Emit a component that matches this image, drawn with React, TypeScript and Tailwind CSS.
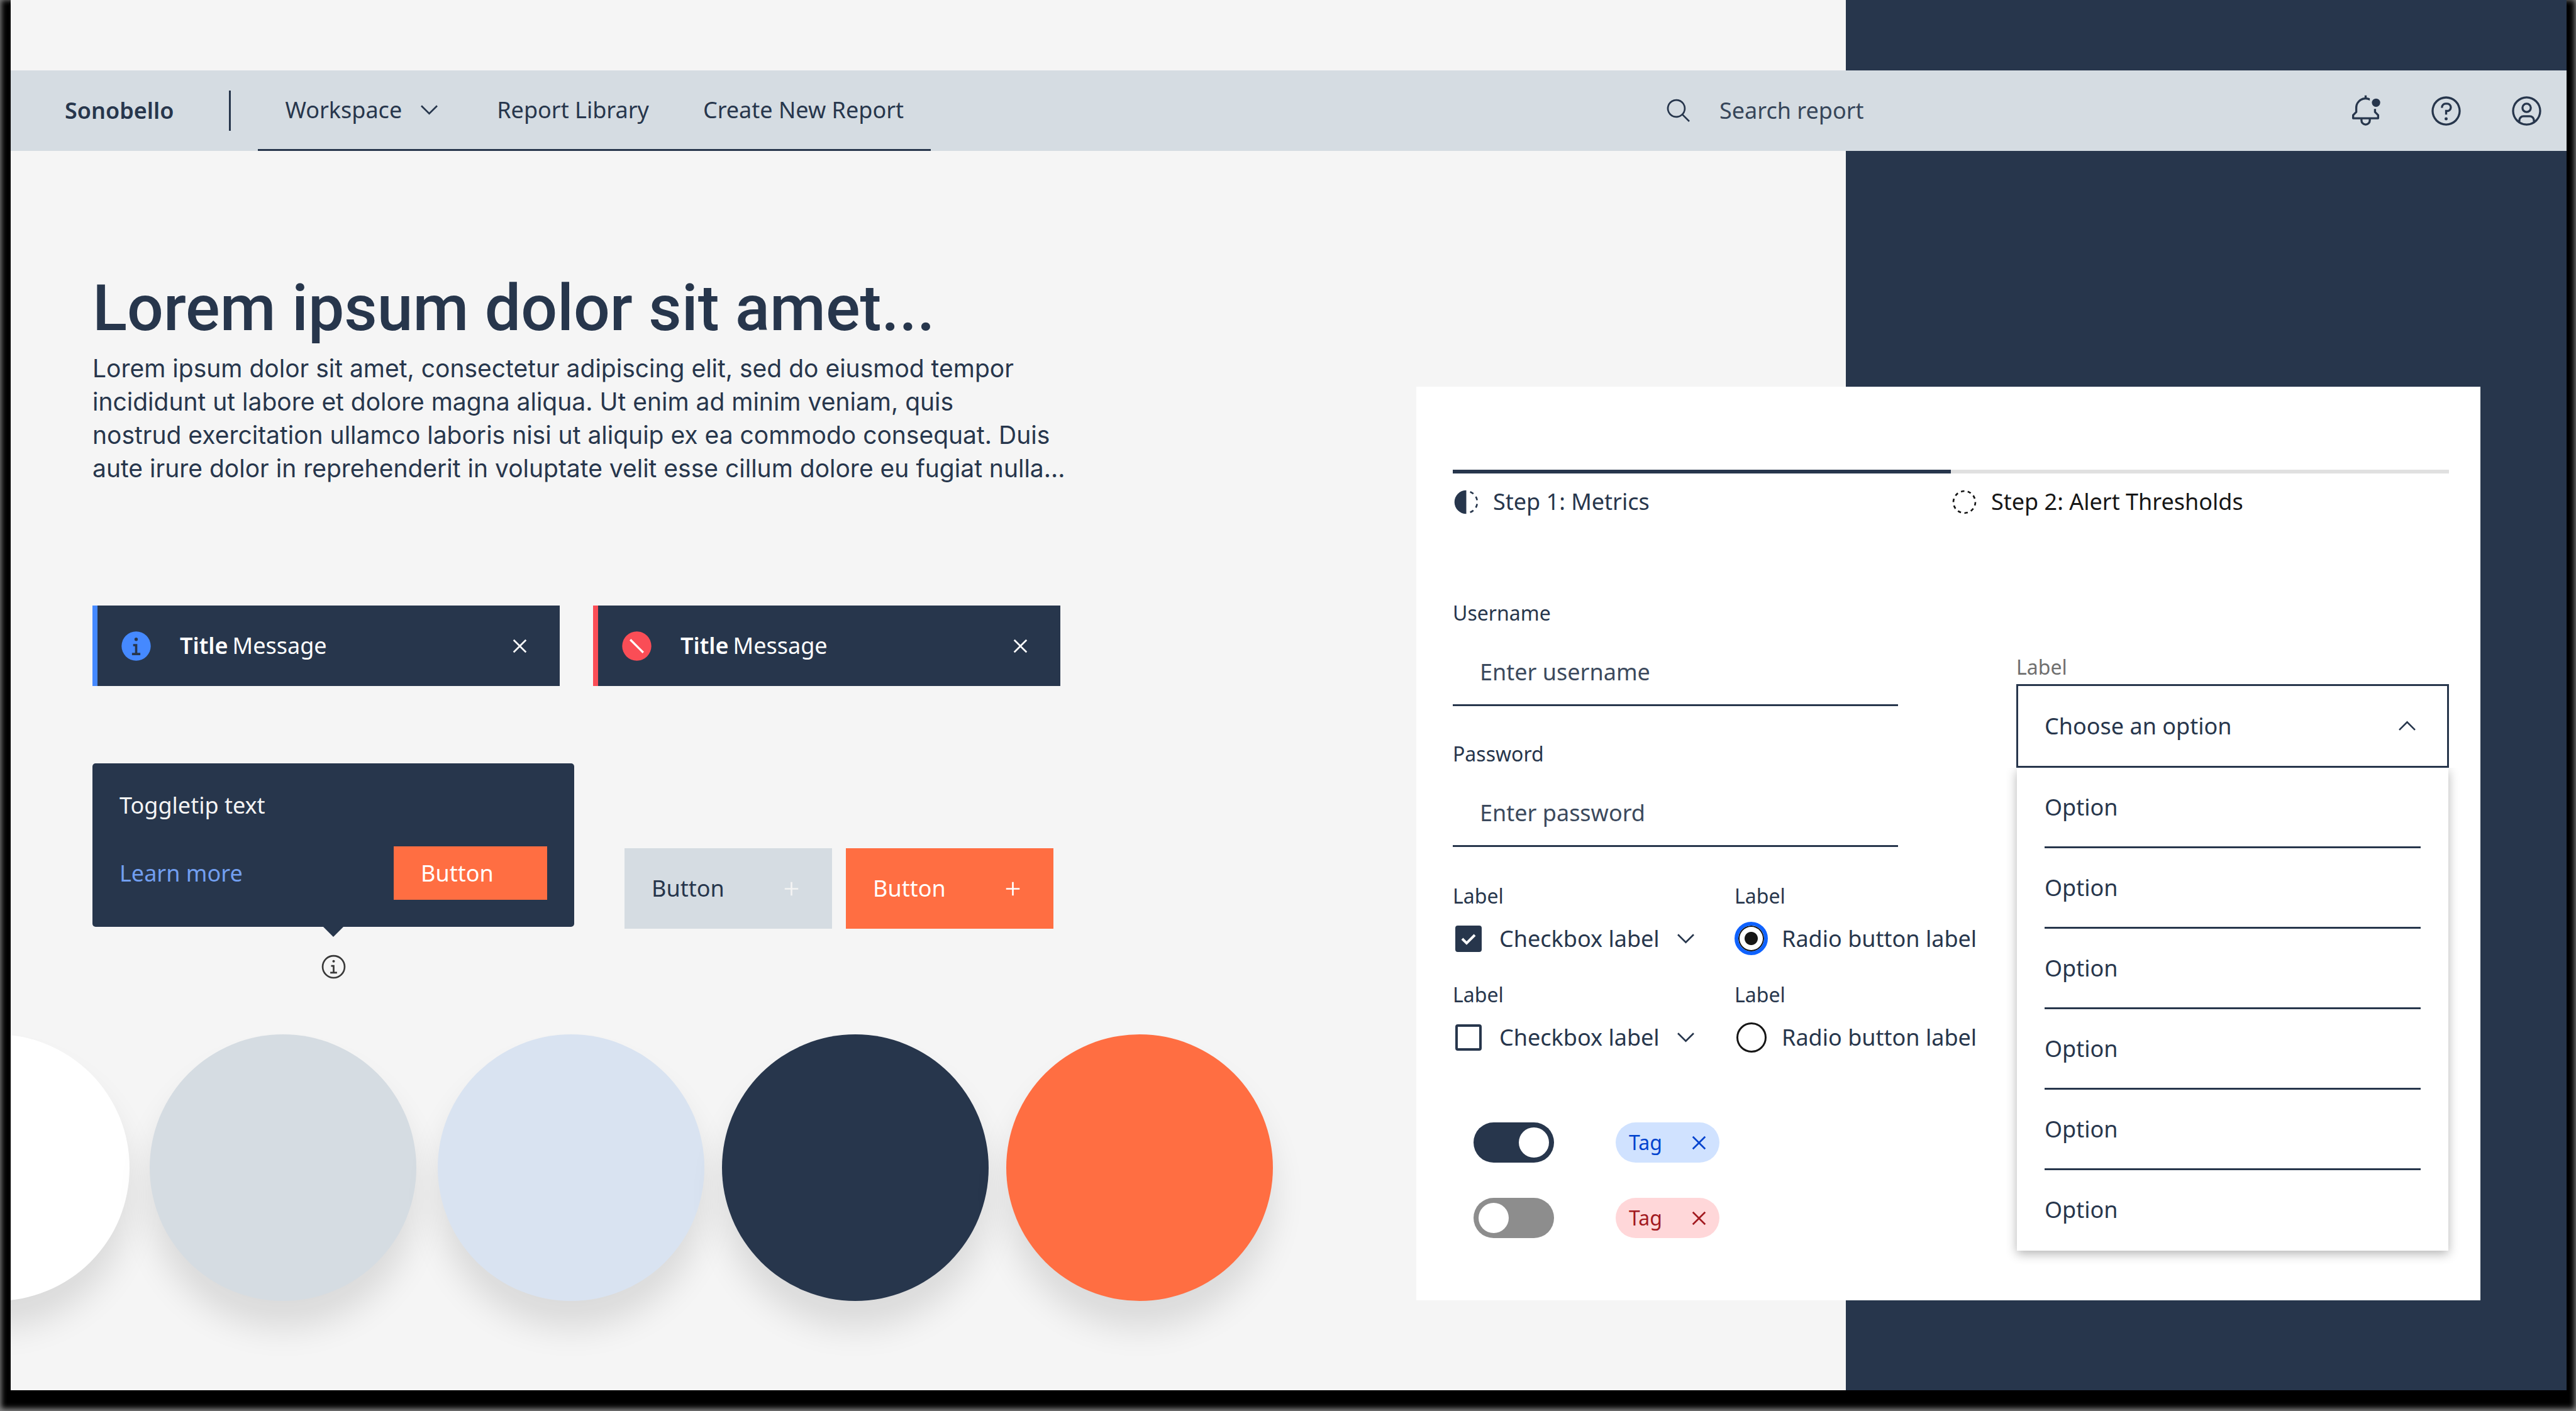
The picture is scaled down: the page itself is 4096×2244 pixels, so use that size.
import type { ReactNode } from "react";

type IconProps = { className?: string; children: ReactNode };

function Icon({ className = "size-[43px]", children }: IconProps) {
  return (
    <svg viewBox="0 0 32 32" fill="currentColor" aria-hidden="true" className={`shrink-0 ${className}`}>
      {children}
    </svg>
  );
}

const ChevronDown = ({ className }: { className?: string }) => (
  <Icon className={className}>
    <path d="M16 22 6 12l1.4-1.4 8.6 8.6 8.6-8.6L26 12z" />
  </Icon>
);

const Close = () => (
  <Icon>
    <path d="M17.4141 16 24 9.4141 22.5859 8 16 14.5859 9.4143 8 8 9.4141 14.5859 16 8 22.5859 9.4143 24 16 17.4141 22.5859 24 24 22.5859z" />
  </Icon>
);

const Add = ({ className }: { className?: string }) => (
  <Icon className={className}>
    <path d="M17 15V8h-2v7H8v2h7v7h2v-7h7v-2z" />
  </Icon>
);

const Search = () => (
  <Icon>
    <path d="M29 27.5859l-7.5521-7.5521a11.0177 11.0177 0 1 0-1.4141 1.4141L27.5859 29ZM4 13a9 9 0 1 1 9 9A9.01 9.01 0 0 1 4 13Z" />
  </Icon>
);

const Bell = () => (
  <Icon className="size-[53px]">
    <path d="M28.7071 19.293 26 16.5859V14h-2v3a1 1 0 0 0 .293.707L27 20.4141V22H5v-1.5859l2.707-2.707A1 1 0 0 0 8 17v-4a7.985 7.985 0 0 1 12-6.918V3.8477a9.8963 9.8963 0 0 0-3-.7969V1h-2v2.0508A10.0145 10.0145 0 0 0 6 13v3.5859L3.293 19.293A1 1 0 0 0 3 20v3a1 1 0 0 0 1 1h7v1a5 5 0 0 0 10 0v-1h7a1 1 0 0 0 1-1v-3a1 1 0 0 0-.2929-.707ZM19 25a3 3 0 0 1-6 0v-1h6Z" />
    <circle cx="26" cy="8" r="4" />
  </Icon>
);

const Help = () => (
  <Icon className="size-[53px]">
    <path d="M16 2a14 14 0 1 0 14 14A14 14 0 0 0 16 2Zm0 26a12 12 0 1 1 12-12 12 12 0 0 1-12 12Z" />
    <circle cx="16" cy="23.5" r="1.5" />
    <path d="M17 8h-1.5a4.49 4.49 0 0 0-4.5 4.5v.5h2v-.5a2.5 2.5 0 0 1 2.5-2.5H17a2.5 2.5 0 0 1 0 5h-2v4.5h2V17a4.5 4.5 0 0 0 0-9Z" />
  </Icon>
);

const Avatar = () => (
  <Icon className="size-[53px]">
    <path d="M16 8a5 5 0 1 0 5 5 5 5 0 0 0-5-5Zm0 8a3 3 0 1 1 3-3 3.0034 3.0034 0 0 1-3 3Z" />
    <path d="M16 2a14 14 0 1 0 14 14A14.0158 14.0158 0 0 0 16 2ZM10 26.3765V25a3.0033 3.0033 0 0 1 3-3h6a3.0033 3.0033 0 0 1 3 3v1.3765a11.8989 11.8989 0 0 1-12 0Zm13.9925-1.4507A5.0016 5.0016 0 0 0 19 20h-6a5.0016 5.0016 0 0 0-4.9925 4.9258 12 12 0 1 1 15.985 0Z" />
  </Icon>
);

const InfoFilled = () => (
  <Icon className="size-[53px] text-[#4589ff]">
    <circle cx="16" cy="16" r="14" />
    <path className="fill-[#27364c]" d="M17.1 22.5V14h-4v2.2h1.8v6.3h-2.9v2.2h8v-2.2z" />
    <circle className="fill-[#27364c]" cx="16" cy="9.5" r="1.6" />
  </Icon>
);

const ErrorFilled = () => (
  <Icon className="size-[53px] text-[#fa4d56]">
    <circle cx="16" cy="16" r="14" />
    <path className="stroke-white" strokeWidth="2" d="M9.8 9.8l12.4 12.4" />
  </Icon>
);

const InfoOutline = () => (
  <Icon>
    <path d="M17 22v-8h-4v2h2v6h-3v2h8v-2z" />
    <circle cx="16" cy="9.5" r="1.5" />
    <path d="M16 30a14 14 0 1 1 14-14 14 14 0 0 1-14 14Zm0-26a12 12 0 1 0 12 12A12 12 0 0 0 16 4Z" />
  </Icon>
);

const StepCurrent = () => (
  <Icon>
    <path d="M16 2a14 14 0 0 0 0 28z" />
    <path d="M23.76 6.86l1.29-1.53a13.98 13.98 0 0 0-4.18-2.44l-.67 1.88a12 12 0 0 1 3.56 2.09zM27.81 14l1.97-.41a13.9 13.9 0 0 0-1.64-4.54L26.4 10a12 12 0 0 1 1.41 4zM20.2 27.23l.67 1.88a13.98 13.98 0 0 0 4.18-2.44l-1.29-1.53a12 12 0 0 1-3.56 2.09zM26.4 22l1.74 1a14.14 14.14 0 0 0 1.64-4.57L27.81 18a12 12 0 0 1-1.41 4z" />
  </Icon>
);

const StepPending = () => (
  <Icon>
    <path d="M7.7 4.7a14.7 14.7 0 0 0-3 3.1L6.3 9a13.26 13.26 0 0 1 2.6-2.7ZM4.6 12.3l-1.9-.6A12.51 12.51 0 0 0 2 16h2a11.48 11.48 0 0 1 .6-3.7ZM2.7 20.4a14.4 14.4 0 0 0 2 3.9l1.6-1.2a12.89 12.89 0 0 1-1.7-3.3ZM7.8 27.3a14.4 14.4 0 0 0 3.9 2l.6-1.9A12.89 12.89 0 0 1 9 25.7ZM11.7 2.7l.6 1.9A11.48 11.48 0 0 1 16 4V2a12.51 12.51 0 0 0-4.3.7ZM24.2 27.3a15.18 15.18 0 0 0 3.1-3.1L25.7 23a11.53 11.53 0 0 1-2.7 2.7ZM27.4 19.7l1.9.6A15.47 15.47 0 0 0 30 16h-2a11.48 11.48 0 0 1-.6 3.7ZM29.2 11.6a14.4 14.4 0 0 0-2-3.9l-1.6 1.2a12.89 12.89 0 0 1 1.7 3.3ZM24.1 4.6a14.4 14.4 0 0 0-3.9-2l-.6 1.9a12.89 12.89 0 0 1 3.3 1.7ZM20.3 29.3l-.6-1.9a11.48 11.48 0 0 1-3.7.6v2a21.42 21.42 0 0 0 4.3-.7Z" />
  </Icon>
);

function Header() {
  return (
    <header className="mt-28 flex h-32 items-center bg-[#d5dce2]">
      <a href="#home" className="pl-[86px] font-semibold">
        Sonobello
      </a>
      <nav aria-label="Main" className="ml-[88px] flex h-full items-center">
        <span className="mr-[43px] h-16 w-[3px] bg-[#27364c]" />
        <div className="flex h-full items-center gap-[86px] border-b-[3px] border-[#27364c] px-[43px]">
          <button type="button" className="flex items-center gap-[22px]">
            Workspace
            <ChevronDown />
          </button>
          <a href="#library">Report Library</a>
          <a href="#new">Create New Report</a>
        </div>
      </nav>
      <label className="ml-auto flex w-[1049px] items-center gap-[43px]">
        <Search />
        <input
          type="search"
          aria-label="Search report"
          placeholder="Search report"
          className="min-w-0 flex-1 bg-transparent outline-none placeholder:text-[#27364c] placeholder:opacity-90"
        />
      </label>
      <button type="button" aria-label="Notifications" className="grid size-32 place-items-center">
        <Bell />
      </button>
      <button type="button" aria-label="Help" className="grid size-32 place-items-center">
        <Help />
      </button>
      <button type="button" aria-label="Account" className="grid size-32 place-items-center">
        <Avatar />
      </button>
    </header>
  );
}

function Notification({ accent, icon }: { accent: string; icon: ReactNode }) {
  return (
    <div className={`flex h-32 w-[743px] items-center border-l-8 bg-[#27364c] pl-[35px] text-white ${accent}`}>
      {icon}
      <p className="ml-[43px] flex-1">
        <strong className="mr-[7px] font-semibold">Title</strong>
        Message
      </p>
      <button type="button" aria-label="Dismiss" className="grid size-32 place-items-center">
        <Close />
      </button>
    </div>
  );
}

function Toggletip() {
  return (
    <div className="flex w-[766px] flex-col items-center">
      <div className="w-full rounded-[5px] bg-[#27364c] px-[43px] pt-[43px] pb-[43px] text-[#f4f4f4]">
        <p>Toggletip text</p>
        <div className="mt-[41px] flex items-center justify-between">
          <a href="#more" className="text-[#729ff0]">
            Learn more
          </a>
          <button type="button" className="h-[85px] w-[244px] bg-[#ff6e42] pl-[43px] text-left text-white">
            Button
          </button>
        </div>
      </div>
      <svg viewBox="0 0 32 16" aria-hidden="true" className="h-4 w-8 fill-[#27364c]">
        <path d="M0 0h32L16 16z" />
      </svg>
      <button type="button" aria-label="More information" className="mt-[26px] text-[#393939]">
        <InfoOutline />
      </button>
    </div>
  );
}

const swatches = [
  "bg-white",
  "ml-8 bg-[#d5dce2]",
  "ml-[34px] bg-[#d9e3f1]",
  "ml-7 bg-[#27364c]",
  "ml-7 bg-[#ff6e42]",
];

function Showcase() {
  return (
    <section className="min-w-0 flex-1">
      <div className="pl-[130px]">
        <h1 className="pt-[186px] font-['Roboto',sans-serif] text-[102px] leading-[128px] font-medium">
          Lorem ipsum dolor sit amet...
        </h1>
        <p className="mt-[5px] font-['Inter',sans-serif] text-[39px] leading-[53px]">
          Lorem ipsum dolor sit amet, consectetur adipiscing elit, sed do eiusmod tempor
          <br />
          incididunt ut labore et dolore magna aliqua. Ut enim ad minim veniam, quis
          <br />
          nostrud exercitation ullamco laboris nisi ut aliquip ex ea commodo consequat. Duis
          <br />
          aute irure dolor in reprehenderit in voluptate velit esse cillum dolore eu fugiat nulla...
        </p>
        <div className="mt-48 flex gap-[53px]">
          <Notification accent="border-[#4589ff]" icon={<InfoFilled />} />
          <Notification accent="border-[#fa4d56]" icon={<ErrorFilled />} />
        </div>
        <div className="mt-[123px] flex items-start">
          <Toggletip />
          <div className="mt-[135px] ml-20 flex gap-[22px]">
            <button type="button" className="flex h-32 w-[330px] items-center justify-between bg-[#d5dce2] px-[43px]">
              Button
              <Add className="size-[43px] text-[#f4f4f4]" />
            </button>
            <button
              type="button"
              className="flex h-32 w-[330px] items-center justify-between bg-[#ff6e42] px-[43px] text-white"
            >
              Button
              <Add className="size-[43px]" />
            </button>
          </div>
        </div>
      </div>
      <div className="mt-[86px] -ml-[235px] flex">
        {swatches.map((tone) => (
          <div key={tone} className={`size-[424px] shrink-0 rounded-full shadow-[0_43px_53px_rgba(0,0,0,0.11)] ${tone}`} />
        ))}
      </div>
    </section>
  );
}

function Field({ id, label, type, placeholder }: { id: string; label: string; type: string; placeholder: string }) {
  return (
    <div className="flex w-[79%] flex-col gap-5">
      <label htmlFor={id} className="text-[32px] leading-[43px]">
        {label}
      </label>
      <input
        id={id}
        type={type}
        placeholder={placeholder}
        className="h-[107px] border-b-[3px] border-[#27364c] px-[43px] outline-none placeholder:text-[#27364c] placeholder:opacity-90"
      />
    </div>
  );
}

function CheckField({ id, checked }: { id: string; checked: boolean }) {
  return (
    <div className="flex flex-col gap-5">
      <span className="text-[32px] leading-[43px]">Label</span>
      <div className="flex h-[53px] items-center pl-1">
        <span className="relative size-[42px]">
          <input
            id={id}
            type="checkbox"
            defaultChecked={checked}
            className="peer block size-[42px] appearance-none rounded-[4px] border-4 border-[#27364c] checked:bg-[#27364c]"
          />
          <svg
            viewBox="0 0 42 42"
            aria-hidden="true"
            className="pointer-events-none absolute inset-0 hidden fill-none stroke-white stroke-[4] peer-checked:block"
          >
            <path d="M11 21l7 7 13-13" />
          </svg>
        </span>
        <label htmlFor={id} className="ml-7">
          Checkbox label
        </label>
        <ChevronDown className="ml-5 size-[43px]" />
      </div>
    </div>
  );
}

function RadioField({ id, checked }: { id: string; checked: boolean }) {
  return (
    <div className="flex flex-col gap-5">
      <span className="text-[32px] leading-[43px]">Label</span>
      <div className="flex h-[53px] items-center gap-[22px]">
        <span className="grid size-[53px] place-items-center">
          <input
            id={id}
            type="radio"
            name="sample-radio"
            defaultChecked={checked}
            className="size-12 appearance-none rounded-full border-[3px] border-[#161616] checked:size-[53px] checked:border-[6px] checked:border-[#0f62fe] checked:bg-[radial-gradient(circle,#161616_0_10px,white_11px)] checked:shadow-[inset_0_0_0_2px_#161616]"
          />
        </span>
        <label htmlFor={id}>Radio button label</label>
      </div>
    </div>
  );
}

function Toggle({ label, on }: { label: string; on: boolean }) {
  return (
    <input
      type="checkbox"
      role="switch"
      aria-label={label}
      defaultChecked={on}
      className="block h-16 w-32 appearance-none rounded-full bg-[#8d8d8d] p-2 before:block before:size-12 before:rounded-full before:bg-white checked:bg-[#27364c] checked:before:ml-16"
    />
  );
}

function Tag({ tone }: { tone: string }) {
  return (
    <span className={`flex h-16 w-[165px] items-center justify-between rounded-full pr-[11px] pl-[21px] text-[32px] ${tone}`}>
      Tag
      <button type="button" aria-label="Remove tag">
        <Close />
      </button>
    </span>
  );
}

function Dropdown() {
  const options = [1, 2, 3, 4, 5, 6];
  return (
    <div className="mt-[86px] flex w-[688px] flex-col">
      <label htmlFor="choice" className="text-[32px] leading-[43px] text-[#6f6f6f]">
        Label
      </label>
      <div className="relative mt-[6px]">
        <select
          id="choice"
          defaultValue=""
          className="h-[133px] w-full appearance-none border-[3px] border-[#27364c] bg-white px-[42px] outline-none"
        >
          <option value="">Choose an option</option>
          {options.map((n) => (
            <option key={n} value={n}>
              Option
            </option>
          ))}
        </select>
        <ChevronDown className="pointer-events-none absolute top-[45px] right-[45px] size-[43px] rotate-180" />
      </div>
      <ul className="mx-px bg-white px-11 shadow-[0_5px_16px_rgba(0,0,0,0.3)] [clip-path:inset(0_-30px_-30px_-30px)]">
        {options.map((n) => (
          <li key={n} className="flex h-32 items-center border-b-[3px] border-[#27364c] last:border-transparent">
            Option
          </li>
        ))}
      </ul>
    </div>
  );
}

function FormCard() {
  return (
    <section className="mt-[375px] mr-[137px] w-[1692px] shrink-0 self-start bg-white pt-[132px] pr-[50px] pb-[79px] pl-[58px]">
      <ol className="grid grid-cols-2">
        <li className="flex items-center gap-[21px] border-t-[6px] border-[#27364c] pt-[21px]">
          <StepCurrent />
          Step 1: Metrics
        </li>
        <li className="flex items-center gap-[21px] border-t-[6px] border-[#e0e0e0] pt-[21px] text-[#161616]">
          <StepPending />
          Step 2: Alert Thresholds
        </li>
      </ol>
      <form className="mt-[131px] flex">
        <div className="min-w-0 flex-1">
          <div className="flex flex-col gap-[54px]">
            <Field id="username" label="Username" type="text" placeholder="Enter username" />
            <Field id="password" label="Password" type="password" placeholder="Enter password" />
          </div>
          <div className="mt-14 grid grid-cols-2 gap-y-[41px]">
            <CheckField id="check-on" checked />
            <RadioField id="radio-on" checked />
            <CheckField id="check-off" checked={false} />
            <RadioField id="radio-off" checked={false} />
          </div>
          <div className="mt-[109px] flex flex-col gap-14 pl-[33px]">
            <div className="flex gap-[98px]">
              <Toggle label="Enabled setting" on />
              <Tag tone="bg-[#d0e2ff] text-[#0043ce]" />
            </div>
            <div className="flex gap-[98px]">
              <Toggle label="Disabled setting" on={false} />
              <Tag tone="bg-[#ffd7d9] text-[#a2191f]" />
            </div>
          </div>
        </div>
        <Dropdown />
      </form>
    </section>
  );
}

export default function App() {
  return (
    <div className="flex min-h-screen flex-col bg-black pr-[15px] pb-[33px] pl-[17px] font-['Noto_Sans',sans-serif] text-[36px] leading-[48px] text-[#27364c] shadow-[inset_0_-2px_8px_2px_#888888]">
      <div className="flex-1 overflow-hidden bg-[linear-gradient(to_right,#f5f5f5_71.8%,#27364c_71.8%)]">
        <Header />
        <main className="flex">
          <Showcase />
          <FormCard />
        </main>
      </div>
    </div>
  );
}
